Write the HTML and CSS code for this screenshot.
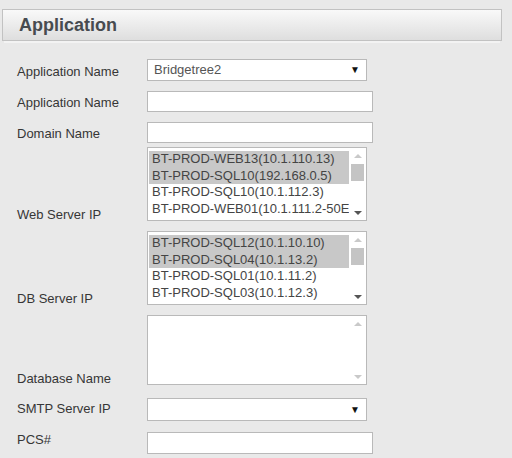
FILE: index.html
```html
<!DOCTYPE html>
<html>
<head>
<meta charset="utf-8">
<link rel="stylesheet" href="styles.css">
</head>
<body>
<div class="panel-head"><h1 class="title">Application</h1></div>
<div class="form">
  <div class="row gap-10">
    <div class="label">Application Name</div>
    <div class="select"><span class="select-text">Bridgetree2</span><span class="caret">▼</span></div>
  </div>
  <div class="row gap-10">
    <div class="label">Application Name</div>
    <div class="input"></div>
  </div>
  <div class="row gap-4">
    <div class="label">Domain Name</div>
    <div class="input"></div>
  </div>
  <div class="row gap-10">
    <div class="label label-list">Web Server IP</div>
    <div class="listbox">
      <div class="options">
        <div class="opt sel">BT-PROD-WEB13(10.1.110.13)</div>
        <div class="opt sel">BT-PROD-SQL10(192.168.0.5)</div>
        <div class="opt">BT-PROD-SQL10(10.1.112.3)</div>
        <div class="opt">BT-PROD-WEB01(10.1.111.2-50E</div>
      </div>
      <div class="sbar"><span class="arr up"></span><span class="thumb"></span><span class="fill"></span><span class="arr down"></span></div>
    </div>
  </div>
  <div class="row gap-10">
    <div class="label label-list">DB Server IP</div>
    <div class="listbox">
      <div class="options">
        <div class="opt sel">BT-PROD-SQL12(10.1.10.10)</div>
        <div class="opt sel">BT-PROD-SQL04(10.1.13.2)</div>
        <div class="opt">BT-PROD-SQL01(10.1.11.2)</div>
        <div class="opt">BT-PROD-SQL03(10.1.12.3)</div>
      </div>
      <div class="sbar"><span class="arr up"></span><span class="thumb"></span><span class="fill"></span><span class="arr down"></span></div>
    </div>
  </div>
  <div class="row gap-13">
    <div class="label label-list">Database Name</div>
    <div class="listbox listbox-empty">
      <div class="options"></div>
      <div class="sbar"><span class="arr up faint"></span><span class="fill"></span><span class="arr down faint"></span></div>
    </div>
  </div>
  <div class="row gap-11">
    <div class="label label-smtp">SMTP Server IP</div>
    <div class="select select-smtp"><span class="select-text"></span><span class="caret">▼</span></div>
  </div>
  <div class="row">
    <div class="label label-pcs">PCS#</div>
    <div class="input input-pcs"></div>
  </div>
</div>
</body>
</html>
```
FILE: styles.css
```css
html, body {
  margin: 0;
  padding: 0;
}
body {
  background: #e9e9e9;
  font-family: "Liberation Sans", Arial, sans-serif;
  font-size: 13px;
  color: #333;
  width: 512px;
  height: 458px;
  overflow: hidden;
}
.panel-head {
  margin: 9px 10px 0 2px;
  height: 30px;
  border: 1px solid #c2c2c2;
  background: linear-gradient(#f9f9f9, #dedede);
  box-shadow: 0 4px 0 -2px #f3f3f3;
  display: flex;
  align-items: center;
  padding-left: 16px;
}
.title {
  margin: 0;
  font-size: 18px;
  font-weight: bold;
  color: #474b50;
  line-height: 20px;
}
.form {
  padding: 18px 0 0 17px;
  display: flex;
  flex-direction: column;
}
.row {
  display: flex;
  align-items: flex-end;
}
.gap-10 { margin-bottom: 10px; }
.gap-4 { margin-bottom: 4px; }
.gap-11 { margin-bottom: 11px; }
.gap-13 { margin-bottom: 13px; }
.label {
  width: 130px;
  flex: none;
  line-height: 16px;
  padding-bottom: 1px;
  color: #363636;
}
.label-list { padding-bottom: 0; margin-bottom: -2px; }
.label-smtp { padding-bottom: 4px; }
.label-pcs { padding-bottom: 6px; }
.select {
  height: 20px;
  border: 1px solid #b9b9b9;
  background: #fff;
  display: flex;
  align-items: center;
  justify-content: space-between;
  padding: 0 0 0 6px;
  box-sizing: content-box;
  width: 212px;
}
.select-smtp { height: 21px; }
.select-text {
  color: #555;
  line-height: 16px;
}
.caret {
  font-size: 10px;
  color: #111;
  margin-right: 6px;
  line-height: 10px;
}
.input {
  width: 224px;
  height: 19px;
  border: 1px solid #b9b9b9;
  background: #fff;
}
.input-pcs { height: 20px; }
.listbox {
  width: 218px;
  height: 72px;
  border: 1px solid #b9b9b9;
  background: #fff;
  display: flex;
  overflow: hidden;
}
.listbox-empty { height: 68px; }
.options {
  flex: 1;
  padding: 3px 0 0 1px;
  overflow: hidden;
  min-width: 0;
}
.opt {
  height: 16.5px;
  line-height: 16px;
  padding-left: 3px;
  white-space: nowrap;
  overflow: hidden;
  color: #444;
}
.opt.sel {
  background: #c8c8c8;
}
.sbar {
  width: 17px;
  flex: none;
  display: flex;
  flex-direction: column;
  align-items: center;
  padding: 6px 0 5px;
}
.arr {
  width: 0;
  height: 0;
  border-left: 4px solid transparent;
  border-right: 4px solid transparent;
  flex: none;
}
.arr.up {
  border-bottom: 4px solid #c9c9c9;
  margin-bottom: 6px;
}
.arr.down {
  border-top: 4px solid #555;
}
.arr.faint.down {
  border-top-color: #c9c9c9;
}
.thumb {
  width: 13px;
  height: 17px;
  background: #c4c4c4;
  flex: none;
}
.fill { flex: 1; }
```
